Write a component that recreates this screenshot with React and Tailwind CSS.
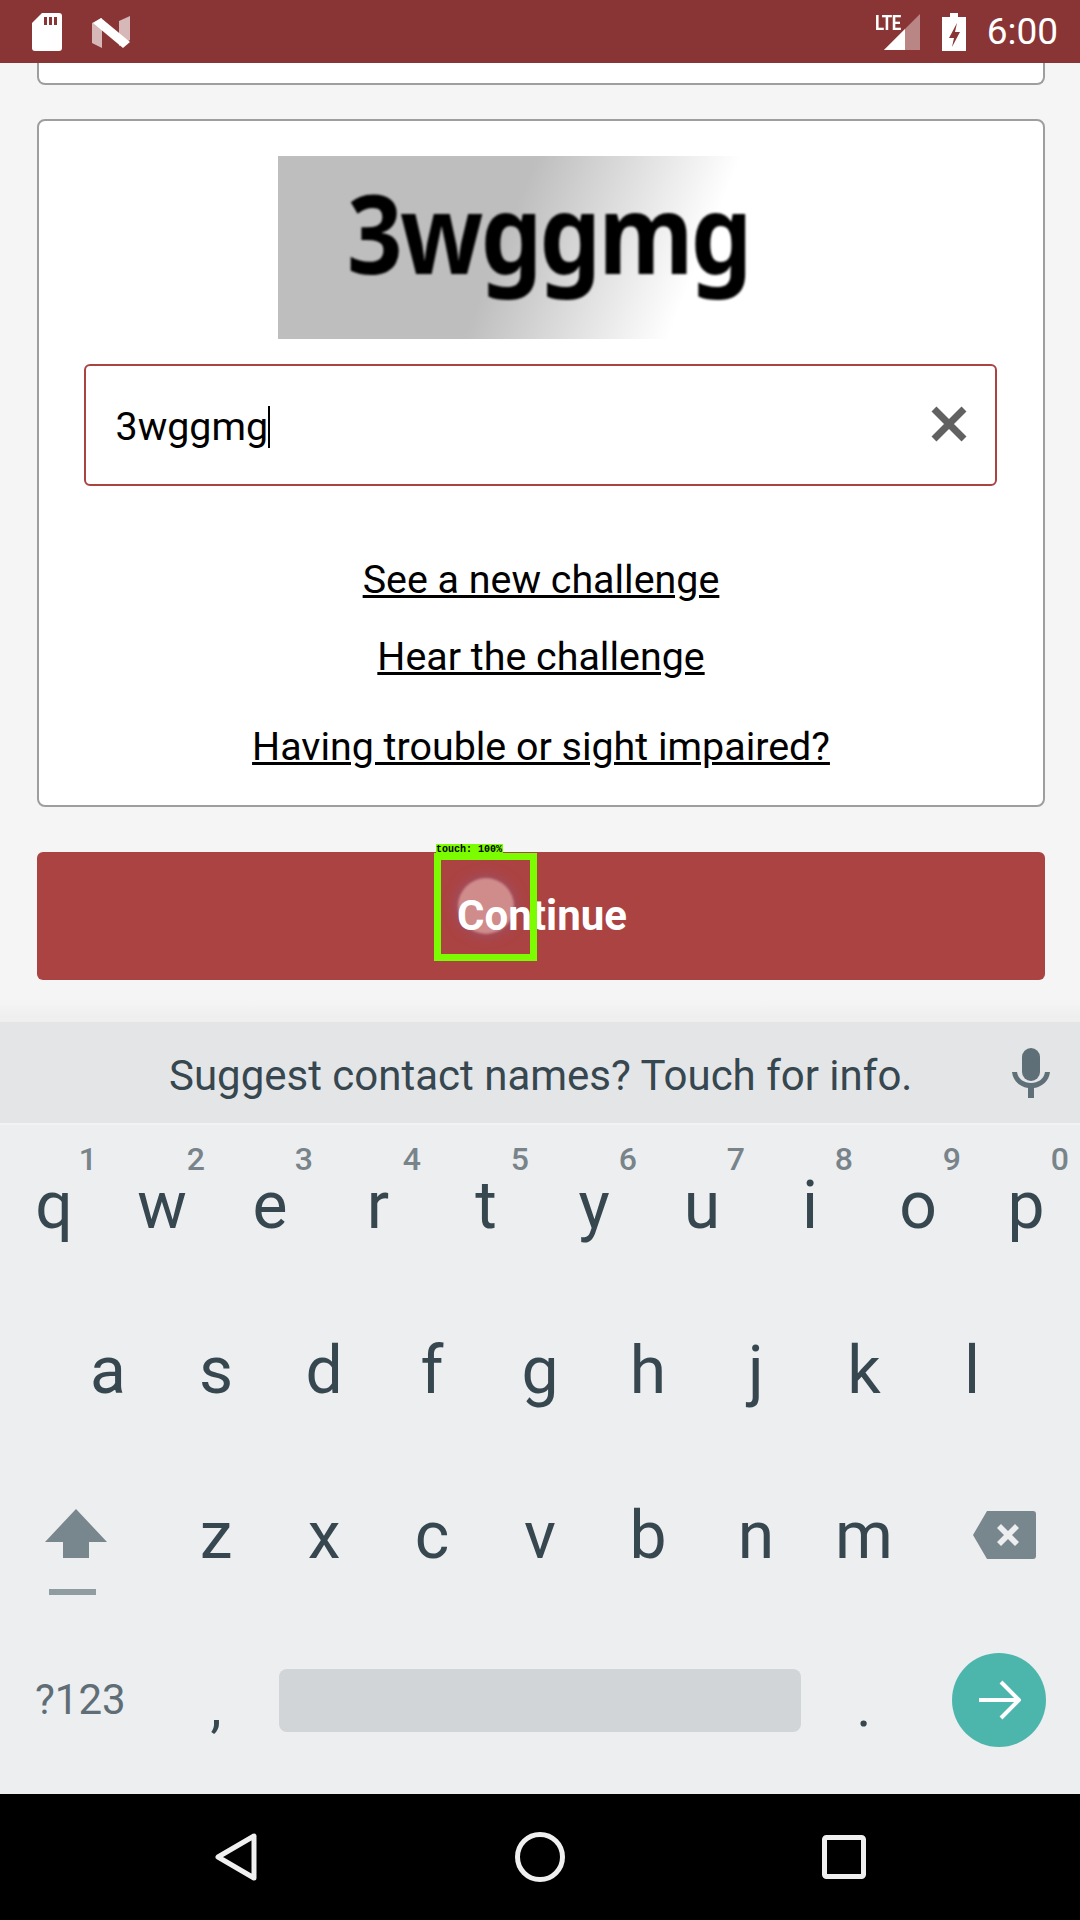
const row1 = [
  ["q", "1"],
  ["w", "2"],
  ["e", "3"],
  ["r", "4"],
  ["t", "5"],
  ["y", "6"],
  ["u", "7"],
  ["i", "8"],
  ["o", "9"],
  ["p", "0"],
];
const row2 = ["a", "s", "d", "f", "g", "h", "j", "k", "l"];
const row3 = ["z", "x", "c", "v", "b", "n", "m"];

function StatusBar() {
  return (
    <div className="flex h-[63px] shrink-0 items-center bg-[#8a3535] pl-[32px] pr-[22px] text-white">
      <svg width="30" height="38" viewBox="0 0 30 38" className="mr-[30px]">
        <path
          d="M10 0h17a3 3 0 0 1 3 3v32a3 3 0 0 1-3 3H3a3 3 0 0 1-3-3V10z"
          fill="#fff"
        />
        <path d="M12 4h3v8h-3zM17 4h3v8h-3zM22 4h3v8h-3z" fill="#8a3535" />
      </svg>
      <svg width="38" height="32" viewBox="0 0 38 32">
        <path d="M0 7l10-5v30L0 27z" fill="#fff" opacity="0.65" />
        <path d="M27 5l11-5v24l-11 6z" fill="#fff" opacity="0.65" />
        <path d="M1 7l8-5 29 24-7 6z" fill="#fff" />
      </svg>
      <div className="ml-auto flex items-center">
        <div className="relative mr-[22px] h-[36px] w-[36px]">
          <svg width="36" height="36" viewBox="0 0 36 36">
            <path d="M0 36L36 0v36z" fill="#fff" opacity="0.4" />
            <path d="M0 36L21 15v21z" fill="#fff" />
          </svg>
          <span className="absolute left-[-9px] top-[0px] origin-left scale-x-[0.8] font-['Roboto'] text-[21px] font-bold leading-[18px] tracking-[-0.5px]">
            LTE
          </span>
        </div>
        <svg width="24" height="38" viewBox="0 0 24 38" className="mr-[21px]">
          <path
            d="M8 0h8v4h8v34H0V4h8zM15 10l-8 15h5l-2 9 8-15h-5z"
            fill="#fff"
            fillRule="evenodd"
          />
        </svg>
        <span className="font-['Roboto'] text-[37px] leading-none">6:00</span>
      </div>
    </div>
  );
}

function Captcha() {
  return (
    <div className="mr-[48px] flex h-[183px] w-[478px] items-center bg-[linear-gradient(112deg,#bebebe_47%,#ffffff_84%)] pl-[69px]">
      <span className="mt-[-34px] origin-left scale-x-[0.885] font-['Noto_Sans'] text-[110px] font-bold leading-none tracking-[-3px] text-black blur-[1px]">
        3wggmg
      </span>
    </div>
  );
}

function Challenge() {
  return (
    <div className="ml-[37px] mr-[35px] mt-[34px] flex h-[688px] flex-col items-center rounded-[8px] border-2 border-[#9e9e9e] bg-white pt-[35px] font-['Roboto'] text-black">
      <Captcha />
      <div className="mr-[2px] mt-[25px] flex h-[122px] w-[913px] items-center justify-between rounded-[6px] border-2 border-[#a94442] bg-white pl-[30px] pr-[28px]">
        <div className="flex items-center pt-[4px] text-[39.4px] leading-none">
          3wggmg
          <span className="h-[42px] w-[2px] bg-black" />
        </div>
        <svg width="36" height="36" viewBox="0 0 36 36" className="mb-[2px]">
          <path d="M3 3l30 30M33 3L3 33" stroke="#616161" strokeWidth="7" />
        </svg>
      </div>
      <a className="mt-[72px] text-[39.4px] leading-[44px] underline">
        See a new challenge
      </a>
      <a className="mt-[33px] text-[39.4px] leading-[44px] underline">
        Hear the challenge
      </a>
      <a className="mt-[46px] text-[39.4px] leading-[44px] underline">
        Having trouble or sight impaired?
      </a>
    </div>
  );
}

function KeyLetter({ children, hint }) {
  return (
    <div className="relative flex h-full w-[108px] items-center justify-center">
      {children}
      {hint && (
        <span className="absolute right-[11px] top-[18px] text-[32px] font-medium leading-none text-[#78848a]">
          {hint}
        </span>
      )}
    </div>
  );
}

function Keyboard() {
  return (
    <div className="flex h-[669px] shrink-0 flex-col bg-[#edeef0] font-['Roboto'] text-[66px] leading-none text-[#37474f]">
      <div className="flex h-[165px] pb-[4px]">
        {row1.map(([k, n]) => (
          <KeyLetter key={k} hint={n}>
            {k}
          </KeyLetter>
        ))}
      </div>
      <div className="flex h-[165px] justify-center pb-[4px]">
        {row2.map((k) => (
          <KeyLetter key={k}>{k}</KeyLetter>
        ))}
      </div>
      <div className="flex h-[165px] pb-[4px]">
        <div className="flex h-full w-[162px] flex-col items-start pl-[45px] pt-[54px]">
          <svg width="62" height="49" viewBox="0 0 62 49">
            <path d="M31 0l31 33H44v16H18V33H0z" fill="#78878e" />
          </svg>
          <div className="ml-[4px] mt-[31px] h-[6px] w-[47px] bg-[#8f9ca2]" />
        </div>
        {row3.map((k) => (
          <KeyLetter key={k}>{k}</KeyLetter>
        ))}
        <div className="flex h-full w-[162px] items-center pb-[2px] pl-[55px]">
          <svg width="63" height="48" viewBox="0 0 63 48">
            <path
              d="M14 0h46a3 3 0 0 1 3 3v42a3 3 0 0 1-3 3H14L0 24zM28 13l-4 4 7 7-7 7 4 4 7-7 7 7 4-4-7-7 7-7-4-4-7 7z"
              fill="#78878e"
              fillRule="evenodd"
            />
          </svg>
        </div>
      </div>
      <div className="flex h-[174px] items-center pb-[14px]">
        <div className="w-[162px] pl-[35px] text-[42px] text-[#5f6e76]">?123</div>
        <div className="flex w-[108px] justify-center pt-[14px] text-[56px]">,</div>
        <div className="mx-[9px] h-[63px] w-[522px] rounded-[8px] bg-[#d1d5d8]" />
        <div className="flex w-[108px] justify-center pt-[14px] text-[56px]">.</div>
        <div className="ml-[34px] flex h-[94px] w-[94px] items-center justify-center rounded-full bg-[#4db6ac]">
          <svg width="44" height="44" viewBox="0 0 44 44" fill="none">
            <path d="M2 22h38M24 4l18 18-18 18" stroke="#fff" strokeWidth="4" />
          </svg>
        </div>
      </div>
    </div>
  );
}

function NavBar() {
  return (
    <div className="flex h-[126px] shrink-0 items-center bg-black pb-[1px]">
      <div className="flex w-full items-center justify-center gap-[257px]">
        <svg width="44" height="50" viewBox="0 0 44 50" fill="none">
          <path
            d="M40 4v42L4 25z"
            stroke="#f0f0f0"
            strokeWidth="5"
            strokeLinejoin="round"
          />
        </svg>
        <svg width="50" height="50" viewBox="0 0 50 50" fill="none">
          <circle cx="25" cy="25" r="22.5" stroke="#f0f0f0" strokeWidth="5" />
        </svg>
        <svg width="44" height="44" viewBox="0 0 44 44" fill="none">
          <rect
            x="2.5"
            y="2.5"
            width="39"
            height="39"
            rx="2"
            stroke="#f0f0f0"
            strokeWidth="5"
          />
        </svg>
      </div>
    </div>
  );
}

export default function App() {
  return (
    <div className="flex h-[1920px] w-[1080px] flex-col overflow-hidden bg-[#f5f5f5]">
      <StatusBar />
      <div className="flex h-[955px] shrink-0 flex-col">
        <div className="ml-[37px] mr-[35px] h-[22px] shrink-0 rounded-b-[8px] border-x-2 border-b-2 border-[#9e9e9e] bg-white" />
        <Challenge />
        <div className="relative ml-[37px] mr-[35px] mt-[45px] flex h-[128px] shrink-0 items-center justify-center rounded-[6px] bg-[#ac4343] pb-[2px] pl-[2px] font-['Roboto'] text-[42px] font-bold text-white">
          <div className="absolute left-[421px] top-[26px] h-[56px] w-[56px] rounded-full bg-[#f3d4d4]/50 shadow-[0_0_14px_rgba(130,110,170,0.5)] blur-[1px]" />
          <span className="relative">Continue</span>
          <div className="absolute left-[397px] top-[1px] h-[108px] w-[103px] border-[7px] border-[#7cfc00]" />
          <span className="absolute left-[399px] top-[-8px] w-[67px] bg-[#7cfc00] font-['Liberation_Mono'] text-[10px] font-bold leading-[11px] text-black">
            touch: 100%
          </span>
        </div>
        <div className="mt-auto h-[18px] bg-gradient-to-b from-[#f5f5f5] to-[#eeeeee]" />
      </div>
      <div className="flex h-[107px] shrink-0 items-center border-y-[2px] border-t-[4px] border-b-[#f2f3f4] border-t-[#efefef] bg-[#e3e5e7] pl-[169px] pr-[30px] font-['Roboto'] text-[42px] text-[#37474f]">
        <span className="pt-[6px] leading-none">Suggest contact names? Touch for info.</span>
        <svg width="38" height="50" viewBox="0 0 38 50" className="ml-auto" fill="#5f6f78">
          <rect x="10" y="0" width="18" height="33" rx="9" />
          <path d="M0 24h5c1 7 7 11 14 11s13-4 14-11h5c-1 9-8 15-16 16v10h-6V40C8 39 1 33 0 24z" />
        </svg>
      </div>
      <Keyboard />
      <NavBar />
    </div>
  );
}
